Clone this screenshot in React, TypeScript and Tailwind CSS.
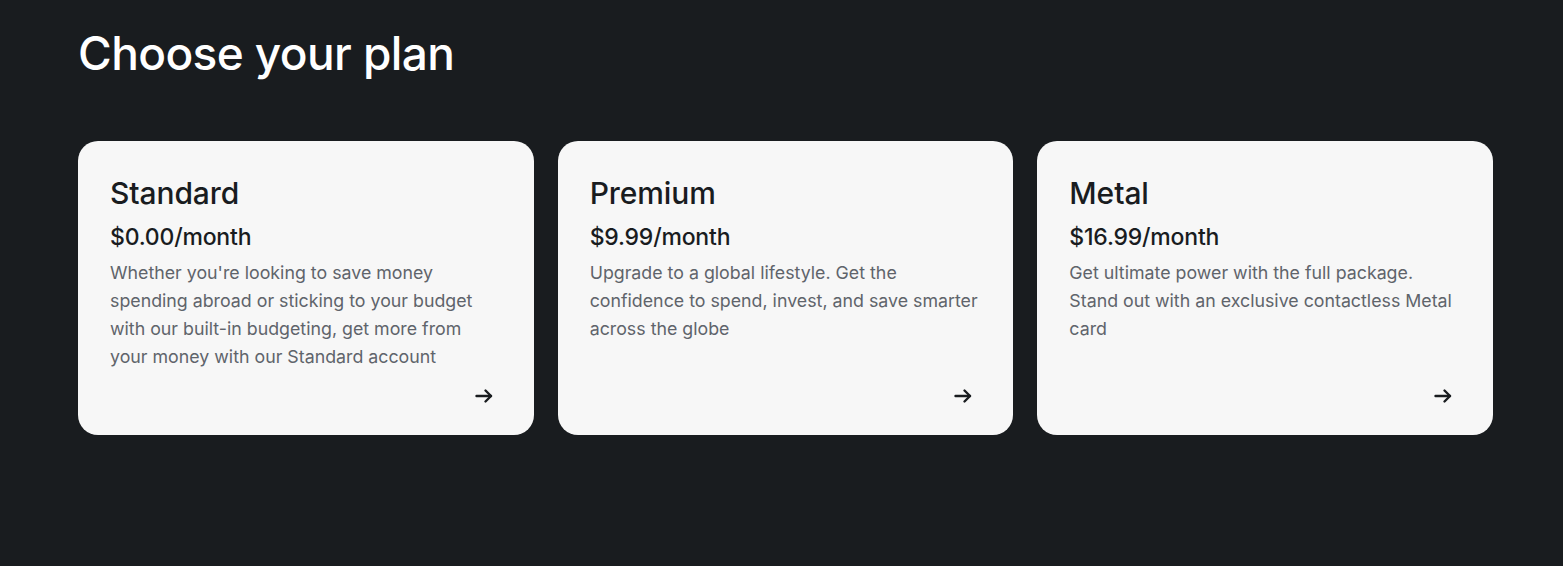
const PLANS = [
  {
    name: "Standard",
    price: "$0.00/month",
    text: "Whether you're looking to save money spending abroad or sticking to your budget with our built-in budgeting, get more from your money with our Standard account",
  },
  {
    name: "Premium",
    price: "$9.99/month",
    text: "Upgrade to a global lifestyle. Get the confidence to spend, invest, and save smarter across the globe",
  },
  {
    name: "Metal",
    price: "$16.99/month",
    text: "Get ultimate power with the full package. Stand out with an exclusive contactless Metal card",
  },
];

const ArrowRight = () => (
  <svg width="20" height="20" viewBox="0 0 20 20" fill="none" stroke="#191c1f" strokeWidth="2.4" strokeLinecap="round" strokeLinejoin="round">
    <path d="M2.5 10h14.5" />
    <path d="M11.5 4.5 17 10l-5.5 5.5" />
  </svg>
);

const PlanCard = ({ plan }: { plan: (typeof PLANS)[number] }) => {
  return (
    <div className="flex flex-col bg-[#f7f7f7] rounded-[20px] h-[294px] pl-8 pr-[33px] pt-[34px] pb-[29px]">
      <h2 className="font-['Inter',sans-serif] font-medium text-[30px] leading-9 text-[#191c1f] tracking-[-0.1px]">
        {plan.name}
      </h2>
      <p className="mt-[12px] font-['Inter',sans-serif] font-medium text-[23px] leading-7 text-[#191c1f] tracking-[-0.2px]">
        {plan.price}
      </p>
      <p className="mt-[8px] font-['Inter',sans-serif] text-[17.8px] leading-7 text-[#5f646b]">
        {plan.text}
      </p>
      <div className="mt-auto flex justify-end pr-[7px]">
        <ArrowRight />
      </div>
    </div>
  );
};

export default function App() {
  return (
    <div className="min-h-[566px] w-full bg-[#191c1f] pl-[78px] pr-[70px] pt-[25px]">
      <h1 className="font-['Inter',sans-serif] font-medium text-[46px] leading-[56px] text-white tracking-[-0.6px]">
        Choose your plan
      </h1>
      <div className="mt-[60px] grid grid-cols-3 gap-6">
        {PLANS.map((p) => (
          <PlanCard key={p.name} plan={p} />
        ))}
      </div>
    </div>
  );
}
